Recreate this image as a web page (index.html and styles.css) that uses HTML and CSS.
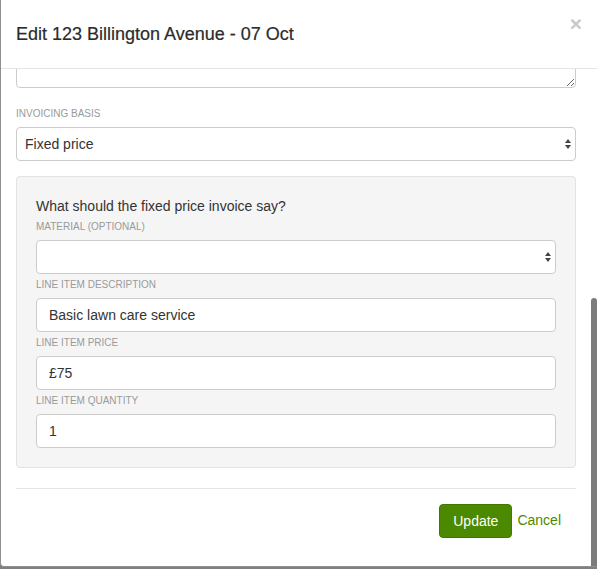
FILE: index.html
```html
<!DOCTYPE html>
<html lang="en">
  <head>
    <meta charset="utf-8">
    <title>Edit visit</title>
    <meta name="viewport" content="width=device-width">
    <link rel="stylesheet" href="styles.css">
  </head>
  <body>
    <div class="modal">
      <div class="modal-header">
        <h4 class="modal-title">Edit 123 Billington Avenue - 07 Oct</h4>
        <span class="close">&times;</span>
      </div>
      <div class="modal-body">
        <textarea class="form-control notes"></textarea>
        <div class="form-group first">
          <label>Invoicing basis</label>
          <div class="form-control select">
            <span>Fixed price</span>
            <svg class="caret" width="6" height="10" viewBox="0 0 6 10"><polygon points="3,0 6,4 0,4"/><polygon points="0,6 6,6 3,10"/></svg>
          </div>
        </div>
        <div class="well">
          <p class="question">What should the fixed price invoice say?</p>
          <div class="form-group">
            <label>Material (optional)</label>
            <div class="form-control select">
              <span></span>
              <svg class="caret" width="6" height="10" viewBox="0 0 6 10"><polygon points="3,0 6,4 0,4"/><polygon points="0,6 6,6 3,10"/></svg>
            </div>
          </div>
          <div class="form-group">
            <label>Line item description</label>
            <input class="form-control" type="text" value="Basic lawn care service">
          </div>
          <div class="form-group">
            <label>Line item price</label>
            <input class="form-control" type="text" value="£75">
          </div>
          <div class="form-group">
            <label>Line item quantity</label>
            <input class="form-control" type="text" value="1">
          </div>
        </div>
        <div class="modal-footer">
          <button class="btn">Update</button>
          <a class="cancel" href="#">Cancel</a>
        </div>
      </div>
      <div class="scroll-thumb"></div>
    </div>
  </body>
</html>
```

FILE: styles.css
```css
* {
    box-sizing: border-box;
}

body {
    margin: 0;
    background: #808080;
    font-family: "Liberation Sans", Arial, sans-serif;
    font-size: 14px;
    color: #333;
}

.modal {
    position: relative;
    width: 597px;
    height: 567px;
    background: #fff;
    border-left: 1px solid #8f8f8f;
    border-bottom: 1px solid #8f8f8f;
    border-bottom-left-radius: 4px;
    overflow: hidden;
}

.modal-header {
    display: flex;
    justify-content: space-between;
    align-items: flex-start;
    padding: 21px 15px 21px 15px;
    border-bottom: 1px solid #e5e5e5;
}
.modal-title {
    margin: 0;
    font-size: 18px;
    font-weight: normal;
    line-height: 26px;
    color: #2b2b2b;
    -webkit-text-stroke: 0.2px #2b2b2b;
}
.close {
    font-size: 21px;
    font-weight: bold;
    line-height: 1;
    color: #c8c8c8;
    margin-top: -8px;
}

/* body is scrolled a little, so the notes box is cut at the top */
.modal-body {
    padding: 0 21px 0 15px;
    overflow: hidden;
    height: 497px;
}

.form-control {
    display: block;
    width: 100%;
    height: 34px;
    padding: 6px 12px;
    font-family: inherit;
    font-size: 14px;
    line-height: 20px;
    color: #333;
    background: #fff;
    border: 1px solid #ccc;
    border-radius: 4px;
    margin: 0;
}

.notes {
    height: 62px;
    margin-top: -43px;
    resize: vertical;
}

.form-group {
    margin-bottom: 3px;
}
.form-group.first {
    margin-top: 18px;
    margin-bottom: 15px;
}
.form-group:last-child {
    margin-bottom: 0;
}
label {
    display: block;
    font-size: 10px;
    line-height: 16px;
    text-transform: uppercase;
    color: #9a9a9a;
    margin-bottom: 5px;
}

.select {
    display: flex;
    justify-content: space-between;
    align-items: center;
    padding: 6px 4px 6px 8px;
}
.caret {
    fill: #444;
}

.well {
    background: #f5f5f5;
    border: 1px solid #e3e3e3;
    border-radius: 4px;
    padding: 19px;
}
.question {
    margin: 0 0 3px;
    line-height: 20px;
}

.modal-footer {
    margin-top: 20px;
    border-top: 1px solid #e5e5e5;
    padding: 15px 15px 15px 0;
    display: flex;
    justify-content: flex-end;
    align-items: center;
    gap: 5px;
}
.btn {
    height: 34px;
    padding: 6px 13px;
    font-family: inherit;
    font-size: 14px;
    line-height: 20px;
    color: #fff;
    background: #4b8a00;
    border: 1px solid #417800;
    border-radius: 4px;
}
.cancel {
    color: #4b8a00;
    text-decoration: none;
    margin-top: -2px;
}

/* overlay scrollbar of the modal body */
.scroll-thumb {
    position: absolute;
    right: 0;
    top: 298px;
    bottom: -1px;
    width: 6px;
    background: #7c7c7c;
    border-radius: 3px 3px 0 0;
}
```
